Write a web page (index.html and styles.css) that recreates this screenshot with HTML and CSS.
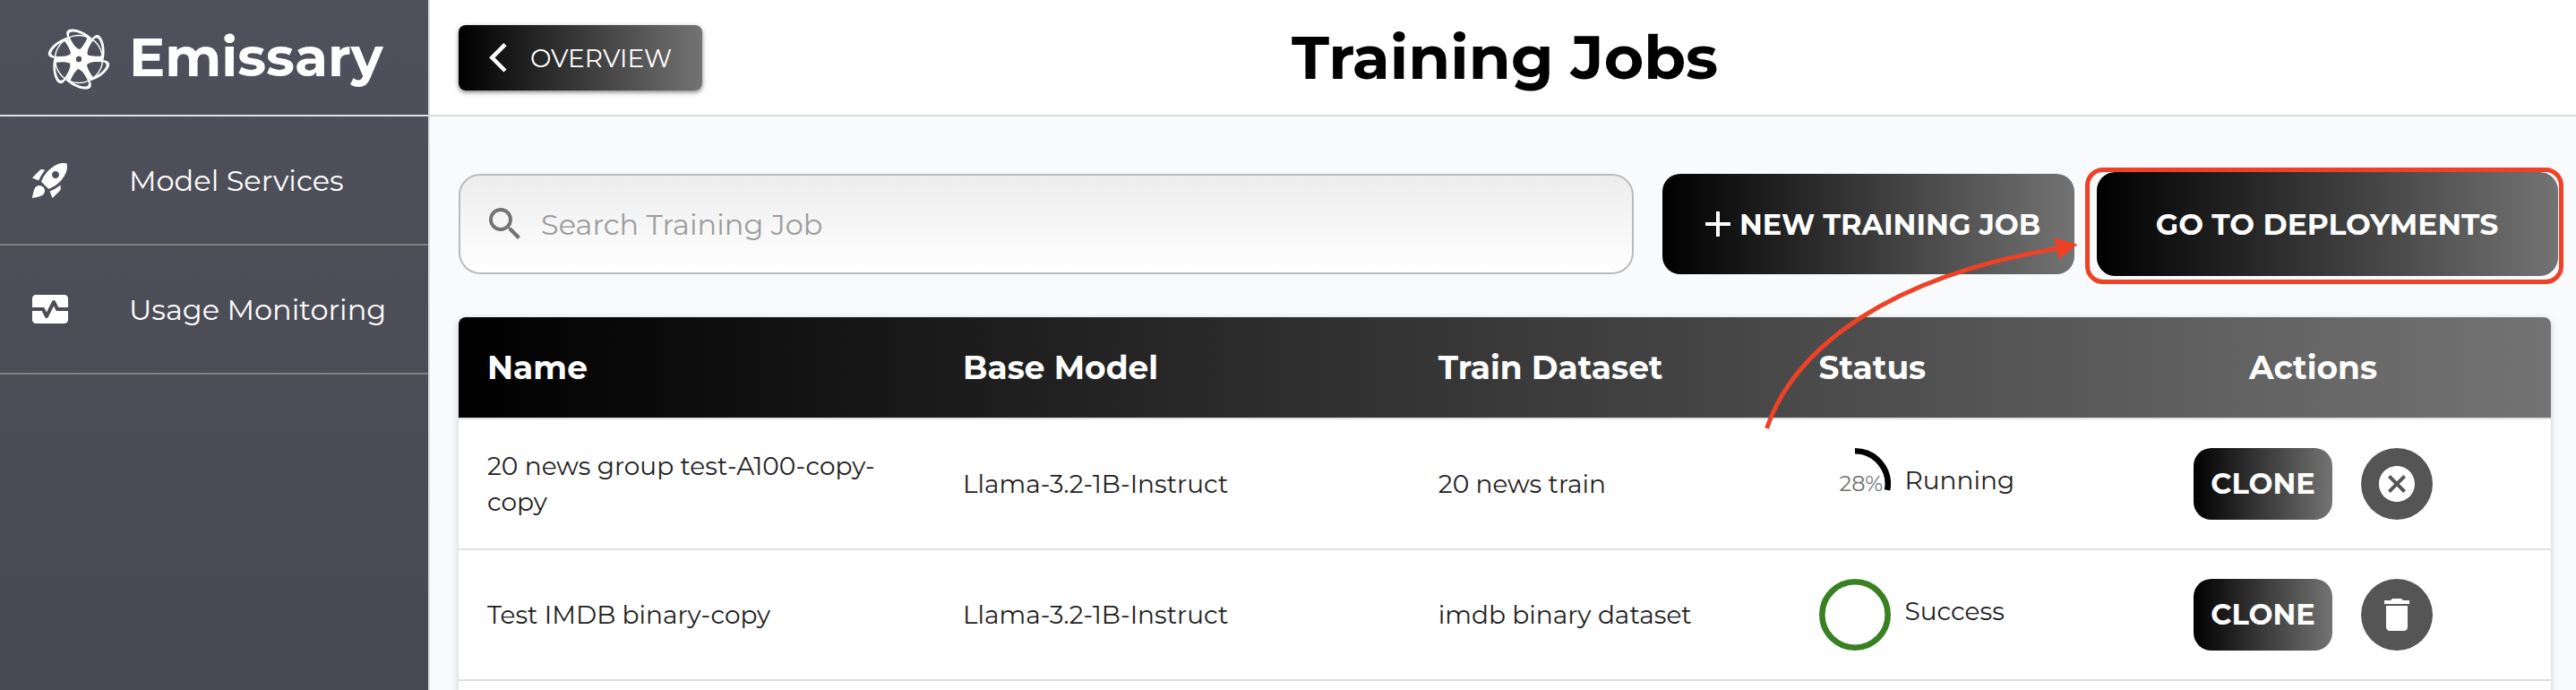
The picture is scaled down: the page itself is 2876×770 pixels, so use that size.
FILE: index.html
```html
<!DOCTYPE html>
<html lang="en">
<head>
<meta charset="utf-8">
<title>Training Jobs</title>
<link rel="stylesheet" href="styles.css">
</head>
<body>
<div class="app">
  <aside class="sidebar">
    <div class="brand">
      <svg class="brand-logo" viewBox="-36 -36 72 72">
        <defs>
          <g id="loop">
            <path d="M-5-7L-12-23C-16-31-13-34-6-33.500C2-32.500 10-28 15-23L12.500-21C8-26 1-30-6-30.500C-11-31-12-28-10-24C-7-18-5-14 0-11Z"/>
            <path class="logo-thin" d="M-11-24C-5-27.500 6-27.500 12-23"/>
            <path d="M0-10C4-13 7-18 10-25L13.500-22L6-6Z"/>
          </g>
        </defs>
        <use href="#loop"/>
        <use href="#loop" transform="rotate(60)"/>
        <use href="#loop" transform="rotate(120)"/>
        <use href="#loop" transform="rotate(180)"/>
        <use href="#loop" transform="rotate(240)"/>
        <use href="#loop" transform="rotate(300)"/>
        <circle class="logo-hub" r="7.200"/>
      </svg>
      <span class="brand-name">Emissary</span>
    </div>
    <a class="nav-item">
      <svg class="nav-icon" viewBox="0 0 24 24"><path d="M9.19 6.35c-2.04 2.29-3.44 5.58-3.57 5.89L2 10.69l4.05-4.05c.47-.47 1.15-.68 1.81-.55zM11.17 17s3.74-1.55 5.89-3.7c5.4-5.4 4.5-9.62 4.21-10.57-.95-.3-5.17-1.19-10.57 4.21C8.55 9.09 7 12.83 7 12.83zm6.48-2.19c-2.29 2.04-5.58 3.44-5.89 3.57L13.31 22l4.05-4.05c.47-.47.68-1.15.55-1.81zM9 18c0 .83-.34 1.58-.88 2.12C6.94 21.3 2 22 2 22s.7-4.94 1.88-6.12A2.996 2.996 0 0 1 9 18m4-9c0-1.1.9-2 2-2s2 .9 2 2-.9 2-2 2-2-.9-2-2"/></svg>
      <span class="nav-label">Model Services</span>
    </a>
    <a class="nav-item">
      <svg class="nav-icon" viewBox="0 0 24 24"><path d="M15.11 12.45 14 10.24l-3.11 6.21c-.16.34-.51.55-.89.55s-.73-.21-.89-.55L7.38 13H2v5c0 1.1.9 2 2 2h16c1.1 0 2-.9 2-2v-5h-6c-.38 0-.73-.21-.89-.55"/><path d="M20 4H4c-1.1 0-2 .9-2 2v5h6c.38 0 .73.21.89.55L10 13.76l3.11-6.21c.34-.68 1.45-.68 1.79 0L16.62 11H22V6c0-1.1-.9-2-2-2"/></svg>
      <span class="nav-label">Usage Monitoring</span>
    </a>
  </aside>
  <div class="main">
    <header class="topbar">
      <button class="overview"><svg class="chevron" viewBox="0 0 24 36"><path d="M20 2.600 5.300 17.300 20 32"/></svg><span>OVERVIEW</span></button>
      <h1 class="title">Training Jobs</h1>
    </header>
    <div class="content">
      <div class="toolbar">
        <div class="search">
          <svg class="search-icon" viewBox="0 0 24 24"><path d="M15.500 14h-.79l-.28-.27C15.410 12.590 16 11.110 16 9.500 16 5.910 13.090 3 9.500 3S3 5.910 3 9.500 5.910 16 9.500 16c1.610 0 3.090-.59 4.230-1.570l.27.28v.79l5 4.990L20.490 19zm-6 0C7.010 14 5 11.990 5 9.500S7.010 5 9.500 5 14 7.010 14 9.500 11.990 14 9.500 14"/></svg>
          <span class="placeholder">Search Training Job</span>
        </div>
        <button class="primary new-job"><svg class="plus" viewBox="0 0 28 28"><path d="M0 14H28M14 0V28"/></svg><span>NEW TRAINING JOB</span></button>
        <div class="highlight"><button class="primary deployments">GO TO DEPLOYMENTS</button></div>
      </div>
      <div class="table">
        <div class="row head">
          <div class="cell">Name</div>
          <div class="cell">Base Model</div>
          <div class="cell">Train Dataset</div>
          <div class="cell">Status</div>
          <div class="cell center">Actions</div>
        </div>
        <div class="row">
          <div class="cell">20 news group test-A100-copy-<br>copy</div>
          <div class="cell">Llama-3.2-1B-Instruct</div>
          <div class="cell">20 news train</div>
          <div class="cell status">
            <div class="ring"><svg viewBox="0 0 80 80"><path class="arc running" d="M40 3.300A36.700 36.700 0 0 1 76.050 46.880"/></svg><span class="percent">28%</span></div>
            <span class="status-text">Running</span>
          </div>
          <div class="cell actions">
            <button class="clone">CLONE</button>
            <button class="round"><svg viewBox="0 0 24 24"><path d="M12 2C6.470 2 2 6.470 2 12s4.470 10 10 10 10-4.470 10-10S17.530 2 12 2m5 13.590L15.590 17 12 13.410 8.410 17 7 15.590 10.590 12 7 8.410 8.410 7 12 10.590 15.590 7 17 8.410 13.410 12z"/></svg></button>
          </div>
        </div>
        <div class="row">
          <div class="cell">Test IMDB binary-copy</div>
          <div class="cell">Llama-3.2-1B-Instruct</div>
          <div class="cell">imdb binary dataset</div>
          <div class="cell status">
            <div class="ring"><svg viewBox="0 0 80 80"><circle class="arc success" cx="40" cy="40" r="36.700"/></svg></div>
            <span class="status-text">Success</span>
          </div>
          <div class="cell actions">
            <button class="clone">CLONE</button>
            <button class="round"><svg viewBox="0 0 24 24"><path d="M6 19c0 1.100.9 2 2 2h8c1.100 0 2-.9 2-2V7H6zM19 4h-3.500l-1-1h-5l-1 1H5v2h14z"/></svg></button>
          </div>
        </div>
        <div class="row"></div>
      </div>
    </div>
  </div>
  <svg class="pointer" viewBox="1960 250 380 240"><path class="pointer-line" d="M1972.500 478C2004 386 2112 308 2298 277"/><path class="pointer-head" d="M2293.500 265.300 2319.500 272.700 2298.500 289.500Z"/></svg>
</div>
</body>
</html>
```
FILE: styles.css
```css
* { box-sizing: border-box; }
body { margin: 0; font-family: Montserrat, Inter, sans-serif; color: #1f1f1f; background: #f9fafc; }
button { font: inherit; border: 0; padding: 0; color: #fff; display: flex; align-items: center; justify-content: center; flex: none; }
span, h1, .cell { white-space: nowrap; }
svg { display: block; flex: none; }
.app { display: flex; width: 2876px; height: 770px; overflow: hidden; position: relative; }
.sidebar { width: 480px; flex: none; border-right: 2px solid #dcdcde; background: linear-gradient(#50505c, #494953); color: #fff; }
.brand { height: 130px; border-bottom: 2px solid #e0e0e0; display: flex; align-items: center; padding: 4px 0 0 52px; }
.brand-logo { width: 72px; height: 72px; margin-right: 20px; fill: #fff; }
.logo-thin { fill: none; stroke: #fff; stroke-width: 1.4; }
.logo-hub { fill: none; stroke: #fff; stroke-width: 8; }
.brand-name { font-size: 60px; line-height: 72px; font-weight: 700; margin-top: -4px; }
.nav-item { height: 144px; border-bottom: 2px solid #808080; display: flex; align-items: center; padding-left: 32px; }
.nav-icon { width: 48px; height: 48px; fill: #fff; margin-right: 64px; }
.nav-label { font-size: 32px; }
.main { flex: 1; min-width: 0; display: flex; flex-direction: column; }
.topbar { height: 130px; flex: none; background: #fff; border-bottom: 2px solid #d8dadf; display: flex; padding: 28px 32px 0; }
.overview { width: 272px; height: 73px; border-radius: 8px; background: linear-gradient(90deg, #000, #737373); box-shadow: 0 2px 4px rgba(0,0,0,.4), 0 2px 8px rgba(0,0,0,.12); font-size: 28px; justify-content: flex-start; padding-left: 32px; }
.chevron { width: 24px; height: 36px; fill: none; stroke: #fff; stroke-width: 4.5; margin-right: 24px; }
.title { margin: 0 0 0 658px; font-size: 68px; line-height: 72px; font-weight: 700; color: #000; }
.content { padding: 57px 14px 0 32px; }
.toolbar { display: flex; align-items: center; height: 130px; }
.search { width: 1312px; height: 112px; flex: none; margin-top: -4px; border: 2px solid #bbb; border-radius: 24px; background: linear-gradient(#ededed, #fff); display: flex; align-items: center; padding-left: 26px; }
.search-icon { width: 48px; height: 48px; fill: #737373; margin-right: 16px; }
.placeholder { font-size: 32px; color: #9d9d9d; }
.primary { height: 112px; border-radius: 20px; background: linear-gradient(90deg, #000, #737373); font-size: 32px; font-weight: 700; }
.new-job { width: 460px; margin: -4px 0 0 32px; justify-content: flex-start; padding-left: 48px; }
.plus { width: 28px; height: 28px; stroke: #fff; stroke-width: 4; margin-right: 10px; }
.highlight { width: 534px; height: 130px; flex: none; margin-left: 12px; border: 5px solid #ee4126; border-radius: 20px; padding-left: 7.5px; }
.deployments { width: 515px; height: 115.5px; font-size: 32.96px; border-radius: 20.6px; }
.table { width: 2336px; margin-top: 37px; background: #fff; border-radius: 8px; overflow: hidden; box-shadow: 0 2px 8px rgba(0,0,0,.18); }
.row { height: 146px; border-bottom: 2px solid #e0e0e0; display: grid; grid-template-columns: 5fr 5fr 4fr 3fr 5fr; align-items: center; font-size: 28px; line-height: 40px; }
.cell { padding-left: 32px; min-width: 0; }
.head { height: 114px; background: linear-gradient(90deg, #000, #737373) border-box; border-bottom-color: #e0e0e0; color: #fff; font-size: 36px; font-weight: 700; }
.center { text-align: center; padding: 0; }
.status { display: flex; align-items: center; }
.ring { width: 80px; height: 80px; position: relative; margin-right: 16px; }
.arc { fill: none; stroke-width: 6.6; }
.running { stroke: #000; }
.success { stroke: #398023; }
.percent { position: absolute; left: 23px; top: 20px; font-size: 24px; color: #707070; }
.status-text { margin-top: -9px; }
.actions { display: flex; justify-content: center; gap: 32px; padding: 0; }
.clone { width: 155px; height: 80px; border-radius: 20px; background: linear-gradient(90deg, #000, #737373); font-size: 32px; font-weight: 700; }
.round { width: 80px; height: 80px; border-radius: 50%; background: #555; }
.round svg { width: 48px; height: 48px; fill: #fff; }
.pointer { position: absolute; left: 1960px; top: 250px; width: 380px; height: 240px; }
.pointer-line { fill: none; stroke: #ee4126; stroke-width: 5; }
.pointer-head { fill: #ee4126; }
```
